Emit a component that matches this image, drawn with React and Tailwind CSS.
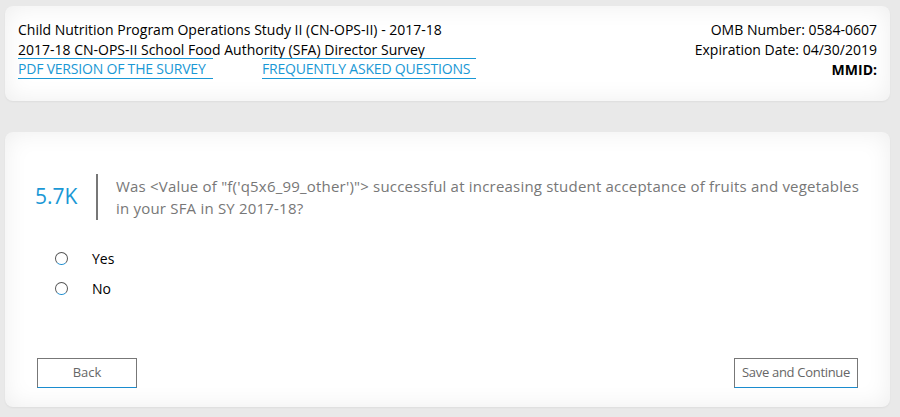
import React from "react";

function Radio({ label }) {
  return (
    <label className="flex items-center h-[30px]">
      <span className="ml-[50px] w-[13px] h-[13px] rounded-full border border-[#555] border-b-[#1a8ccf] bg-white" />
      <span className="ml-[24px] text-[14px] text-black">{label}</span>
    </label>
  );
}

export default function App() {
  return (
    <div
      className="min-h-[417px] bg-[#e9e9e9] pt-[6px] pl-[5px] pr-[10px]"
      style={{ fontFamily: '"Open Sans", "Noto Sans", sans-serif' }}
    >
      <div className="bg-white rounded-[8px] shadow-[inset_0_0_24px_rgba(0,0,0,0.07),0_1px_2px_rgba(0,0,0,0.05)] h-[95px] pl-[13px] pr-[13px] pt-[14px] flex justify-between">
        <div className="text-[14px] leading-[20px] text-black">
          <div>Child Nutrition Program Operations Study II (CN-OPS-II) - 2017-18</div>
          <div>2017-18 CN-OPS-II School Food Authority (SFA) Director Survey</div>
          <div className="flex gap-[49px] -mt-[2px]">
            <a className="block border-t border-b border-[#1a98d5] text-[#1a98d5] leading-[19px] w-[195px] whitespace-nowrap tracking-[-0.2px]">
              PDF VERSION OF THE SURVEY
            </a>
            <a className="block border-t border-b border-[#1a98d5] text-[#1a98d5] leading-[19px] w-[214px] whitespace-nowrap tracking-[-0.2px]">
              FREQUENTLY ASKED QUESTIONS
            </a>
          </div>
        </div>
        <div className="text-[14px] leading-[20px] text-black text-right">
          <div>OMB Number: 0584-0607</div>
          <div>Expiration Date: 04/30/2019</div>
          <div className="font-bold">MMID:</div>
        </div>
      </div>

      <div className="mt-[31px] bg-white rounded-[8px] shadow-[inset_0_0_24px_rgba(0,0,0,0.07),0_1px_2px_rgba(0,0,0,0.05)] h-[275px] flex flex-col">
        <div className="flex items-center mt-[42px] pl-[30px]">
          <div className="shrink-0 text-[21px] text-[#1a98d5] w-[61px]">5.7K</div>
          <div className="shrink-0 w-[2px] h-[46px] bg-[#777]" />
          <div className="ml-[18px] pr-[24px] text-[15px] leading-[22px] text-[#777] tracking-[0.2px]">
            Was &lt;Value of "f('q5x6_99_other')"&gt; successful at increasing student acceptance of fruits and vegetables in your SFA in SY 2017-18?
          </div>
        </div>
        <div className="mt-[23px]">
          <Radio label="Yes" />
          <Radio label="No" />
        </div>
        <div className="mt-auto mb-[19px] flex justify-between pl-[32px] pr-[32px]">
          <button className="w-[100px] h-[30px] border border-[#777] border-b-[#1a8ccf] text-[13px] text-[#666]">
            Back
          </button>
          <button className="w-[124px] h-[30px] border border-[#777] border-b-[#1a8ccf] text-[13px] text-[#666] tracking-[-0.3px]">
            Save and Continue
          </button>
        </div>
      </div>
    </div>
  );
}
